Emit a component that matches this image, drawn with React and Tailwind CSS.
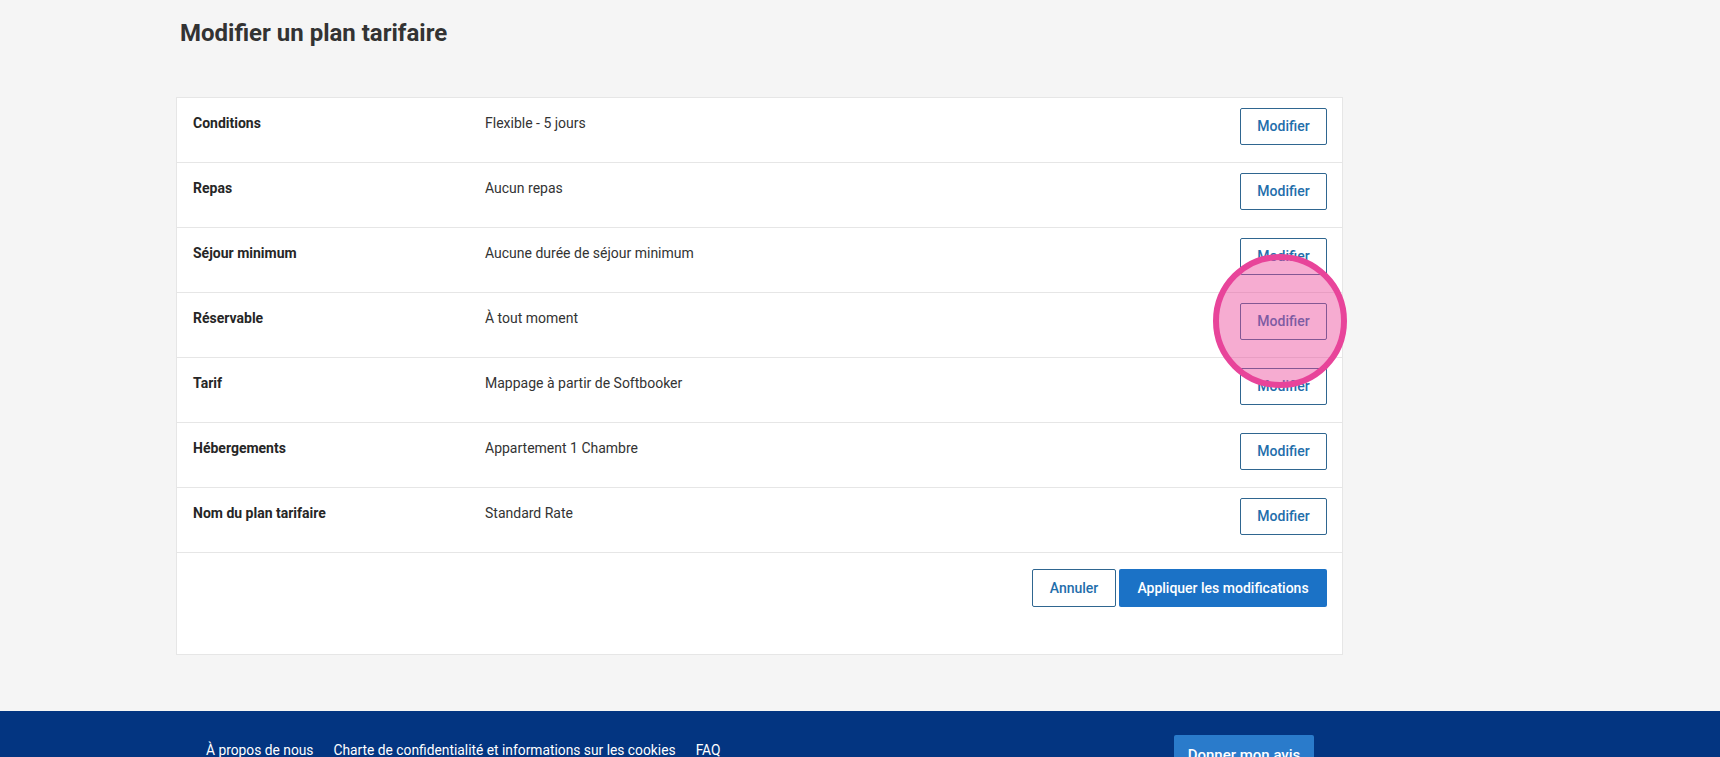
const rows = [
  { label: 'Conditions', value: 'Flexible - 5 jours' },
  { label: 'Repas', value: 'Aucun repas' },
  { label: 'Séjour minimum', value: 'Aucune durée de séjour minimum' },
  { label: 'Réservable', value: 'À tout moment', highlight: true },
  { label: 'Tarif', value: 'Mappage à partir de Softbooker' },
  { label: 'Hébergements', value: 'Appartement 1 Chambre' },
  { label: 'Nom du plan tarifaire', value: 'Standard Rate' },
];

function Row({ row }) {
  return (
    <div className="relative flex h-[65px] items-start border-b border-[#e6e6e6] pl-4 pr-[15px]">
      <div className="w-[292px] pt-[15px] text-[14px] leading-5 font-bold text-[#262626]">{row.label}</div>
      <div className="flex-1 pt-[15px] text-[14px] leading-5 text-[#333]">{row.value}</div>
      <button className="mt-[10px] h-[37px] w-[87px] rounded-[2px] border border-[#2f6690] bg-white text-[14px] font-medium text-[#1f6eab]">
        Modifier
      </button>
      {row.highlight && (
        <div className="pointer-events-none absolute top-[-39px] right-[-5px] z-10 h-[134px] w-[134px] rounded-full border-[6px] border-[#e8449a] bg-[#ec4899]/45" />
      )}
    </div>
  );
}

export default function App() {
  return (
    <div className="min-h-[757px] bg-[#f5f5f5]" style={{ fontFamily: 'Roboto, "Liberation Sans", sans-serif' }}>
      <main className="pl-[176px] pt-[17px] pb-[56px]">
        <h1 className="pl-1 text-[24px] leading-8 font-bold text-[#333]">Modifier un plan tarifaire</h1>

        <div className="mt-[48px] w-[1167px] border border-[#e6e6e6] bg-white">
          {rows.map((row) => (
            <Row key={row.label} row={row} />
          ))}
          <div className="flex justify-end gap-[3px] px-[15px] pt-4 pb-[47px]">
            <button className="h-[38px] w-[84px] rounded-[2px] border border-[#2f6690] bg-white text-[14px] font-medium text-[#1f6eab]">
              Annuler
            </button>
            <button className="h-[38px] w-[208px] rounded-[2px] bg-[#1b72c6] text-[14px] font-medium text-white">
              Appliquer les modifications
            </button>
          </div>
        </div>
      </main>

      <footer className="bg-[#033581] pb-10">
        <div className="flex items-start justify-between pl-[206px] pr-[406px] pt-[24px]">
          <nav className="flex gap-[20px] pt-[5px] text-[13.8px] leading-5 text-white">
            <a href="#">À propos de nous</a>
            <a href="#">Charte de confidentialité et informations sur les cookies</a>
            <a href="#">FAQ</a>
          </nav>
          <button className="h-[40px] w-[140px] rounded-[2px] bg-[#2a7bcb] text-[15px] font-medium text-white">
            Donner mon avis
          </button>
        </div>
      </footer>
    </div>
  );
}
